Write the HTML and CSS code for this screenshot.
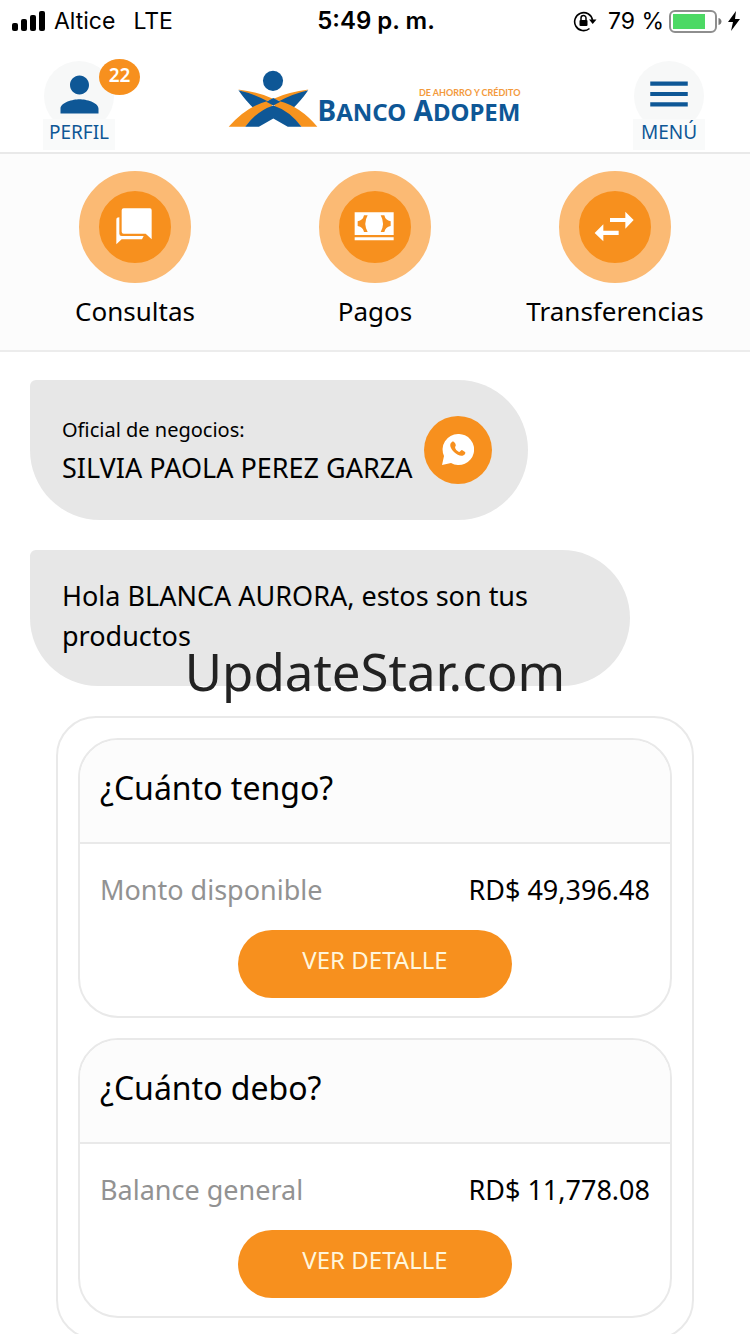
FILE: index.html
```html
<!DOCTYPE html>
<html lang="es">
<head>
<meta charset="utf-8">
<meta name="viewport" content="width=device-width">
<title>Banco Adopem</title>
<link rel="stylesheet" href="styles.css">
</head>
<body>
<div class="status">
  <div class="status-group">
    <svg class="signal" viewBox="0 0 34 20" aria-hidden="true"><rect x="0" y="12" width="6" height="8" rx="2"/><rect x="9" y="8" width="6" height="12" rx="2"/><rect x="18" y="4" width="6" height="16" rx="2"/><rect x="27" y="0" width="6" height="20" rx="2"/></svg>
    <span>Altice</span>
    <span class="network">LTE</span>
  </div>
  <time class="clock">5:49 p. m.</time>
  <div class="status-group status-end">
    <svg class="lock" viewBox="0 0 24 22" aria-hidden="true"><path d="M16.500 18.500A9 9 0 1 1 19.500 10" fill="none" stroke="#000" stroke-width="1.600"/><path d="M16 9.500h7.500l-3.800 4.500z"/><rect x="6.500" y="10" width="8" height="6" rx="1"/><path d="M8 10V8a2.500 2.500 0 0 1 5 0v2" fill="none" stroke="#000" stroke-width="1.500"/></svg>
    <span>79 %</span>
    <svg class="battery" viewBox="0 0 54 23" aria-hidden="true"><rect x="1" y="1" width="46" height="21" rx="5" fill="#fff" stroke="#8e8e8e" stroke-width="2"/><rect x="4" y="4" width="32" height="15" fill="#4cd964"/><path d="M49.500 8v7c4-1 4-6 0-7z" fill="#777"/></svg>
    <svg class="bolt" viewBox="0 0 12 20" aria-hidden="true"><path d="M8 0 0 11h5l-2 9 9-12H7z"/></svg>
  </div>
</div>

<header class="top">
  <button class="nav" type="button">
    <span class="nav-icon"><svg class="person" viewBox="0 0 24 24" aria-hidden="true"><path d="M12 12c2.200 0 4-1.800 4-4s-1.800-4-4-4-4 1.800-4 4 1.800 4 4 4zm0 2c-2.700 0-8 1.300-8 4v2h16v-2c0-2.700-5.300-4-8-4z"/></svg></span>
    <span class="nav-label">PERFIL</span>
    <span class="badge">22</span>
  </button>
  <div class="brand">
    <svg class="mark" viewBox="6 14 268 170" aria-hidden="true">
      <circle cx="140" cy="45" r="30" fill="#0e5796"/>
      <path d="M36 71Q95 78 140 98L116 108 98 103 36 71ZM246 71Q187 78 142 98L166 108 184 103 246 71Z" fill="#f7931e"/>
      <path d="M37 73Q85 84 124 106L108 122 84 128Q60 106 37 73ZM245 73Q197 84 158 106L174 122 198 128Q222 106 245 73Z" fill="#0e5796"/>
      <path d="M8 182Q60 122 122 106L146 118Q92 138 57 182ZM272 182Q222 122 160 106L136 118Q190 138 225 182Z" fill="#f7931e"/>
      <path d="M57 182Q92 134 141 118Q190 134 225 182H184L141 157 98 182Z" fill="#0e5796"/>
      <path d="M141 96 162 107 141 118 120 107Z" fill="#0e5796"/>
    </svg>
    <div class="brand-text">
      <span class="tagline">DE AHORRO Y CRÉDITO</span>
      <span class="brand-name">B<small>ANCO</small> A<small>DOPEM</small></span>
    </div>
  </div>
  <button class="nav" type="button">
    <span class="nav-icon"><svg class="menu" viewBox="0 0 24 24" aria-hidden="true"><path d="M3 6h18v2H3zm0 5h18v2H3zm0 5h18v2H3z"/></svg></span>
    <span class="nav-label">MENÚ</span>
  </button>
</header>

<nav class="actions">
  <button class="action" type="button">
    <span class="disc"><svg viewBox="150 93 216 216" aria-hidden="true"><path d="M224 145H303Q308 145 308 151V238L290 221H224Q218 221 218 215V151Q218 145 224 145ZM202 179Q202 172 211 172V221Q211 228 218 228H284L279 238H218L202 253Z"/></svg></span>
    <span>Consultas</span>
  </button>
  <button class="action" type="button">
    <span class="disc"><svg viewBox="0 0 216 216" aria-hidden="true"><path fill-rule="evenodd" d="M47 64H164V132H47ZM86 73H75Q72 88 56 91V105Q72 108 75 123H86Q72 98 86 73ZM125 73H136Q139 88 155 91V105Q139 108 136 123H125Q139 98 125 73ZM47 139H164V148H47Z"/></svg></span>
    <span>Pagos</span>
  </button>
  <button class="action" type="button">
    <span class="disc"><svg viewBox="237 93 216 216" aria-hidden="true"><path d="M330 174H376V155L401 180 376 206V186H330ZM356 212H310V193L284 219 310 244V225H356Z"/></svg></span>
    <span>Transferencias</span>
  </button>
</nav>

<main>
  <section class="bubble officer">
    <div>
      <p class="role">Oficial de negocios:</p>
      <p>SILVIA PAOLA PEREZ GARZA</p>
    </div>
    <button class="chat" type="button" aria-label="WhatsApp"><svg viewBox="0 0 32 32" aria-hidden="true"><path d="M16 0a15.500 15.500 0 1 1-7 29L0 31l2-9A15.500 15.500 0 0 1 16 0z" fill="#fff"/><path d="M10 8c-3 2-2 6 2 10s9 5 11 2c1-2 0-2-3-4-1 0-2 2-3 2-2-1-4-3-4-5 1-1 1-2 0-4-1-1-2-2-3-1z" fill="#f7901e"/></svg></button>
  </section>

  <section class="bubble greeting">
    <p>Hola BLANCA AURORA, estos son tus productos</p>
  </section>

  <section class="products">
    <article class="card">
      <h2>¿Cuánto tengo?</h2>
      <div class="card-body">
        <div class="row"><span class="muted">Monto disponible</span><span>RD$ 49,396.48</span></div>
        <button class="detail" type="button">VER DETALLE</button>
      </div>
    </article>
    <article class="card">
      <h2>¿Cuánto debo?</h2>
      <div class="card-body">
        <div class="row"><span class="muted">Balance general</span><span>RD$ 11,778.08</span></div>
        <button class="detail" type="button">VER DETALLE</button>
      </div>
    </article>
  </section>
</main>
<div class="watermark">UpdateStar.com</div>
</body>
</html>
```

FILE: styles.css
```css
* {
  box-sizing: border-box;
}

body {
  margin: 0;
  background: #fff;
  color: #000;
  font: 27px/40px "Noto Sans", "Open Sans", sans-serif;
  position: relative;
}

button {
  margin: 0;
  padding: 0;
  border: 0;
  background: none;
  color: inherit;
  font: inherit;
  cursor: pointer;
}

svg {
  display: block;
}

p,
h2 {
  margin: 0;
}

/* Status bar */
.status {
  display: grid;
  grid-template-columns: 1fr auto 1fr;
  align-items: center;
  height: 42px;
  padding: 0 10px 0 12px;
  font: 23px/40px Inter, sans-serif;
}

.status-group {
  display: flex;
  align-items: center;
  gap: 8px;
}

.status-end {
  justify-content: flex-end;
  gap: 5px;
}

.signal {
  width: 34px;
  height: 20px;
}

.network {
  margin-left: 10px;
}

.clock {
  font-size: 24px;
  font-weight: 600;
}

.lock {
  width: 24px;
  height: 22px;
  margin-right: 6px;
}

.battery {
  width: 54px;
  height: 23px;
}

.bolt {
  width: 12px;
  height: 20px;
}

/* Header */
.top {
  display: flex;
  justify-content: space-between;
  align-items: flex-end;
  height: 112px;
  padding: 0 45px 2px 43px;
  border-bottom: 2px solid #e9e9e9;
}

.nav {
  position: relative;
  display: flex;
  flex-direction: column;
  align-items: center;
  width: 72px;
  color: #0e5796;
}

.nav-icon {
  display: grid;
  place-items: center;
  width: 70px;
  height: 70px;
  margin-bottom: -12px;
  padding-bottom: 4px;
  border-radius: 50%;
  background: #f7f8f8;
}

.nav-icon svg {
  fill: #0e5796;
}

.person {
  width: 57px;
  height: 57px;
}

.menu {
  width: 50px;
  height: 50px;
}

.nav-label {
  width: 100%;
  padding-bottom: 5px;
  background: #f9fafa;
  font-size: 19px;
  line-height: 26px;
}

.badge {
  position: absolute;
  top: -2px;
  right: -25px;
  width: 41px;
  height: 36px;
  border-radius: 50%;
  background: #f7901e;
  color: #fff;
  font-size: 19px;
  font-weight: 600;
  line-height: 32px;
}

.brand {
  display: flex;
  align-items: flex-end;
  padding-bottom: 22px;
}

.mark {
  width: 90px;
  height: 58px;
}

.brand-text {
  display: flex;
  flex-direction: column;
  padding-bottom: 4px;
  color: #0e5796;
  font-weight: 700;
}

.tagline {
  align-self: flex-end;
  color: #f39a3c;
  font: 700 9px/10px Lato, sans-serif;
}

.brand-name {
  font-size: 28px;
  line-height: 24px;
  white-space: nowrap;
}

.brand-name small {
  font-size: 24px;
}

/* Quick actions */
.actions {
  display: grid;
  grid-template-columns: repeat(3, 1fr);
  padding: 17px 15px 19px;
  border-bottom: 2px solid #ececec;
  background: #fcfcfc;
}

.action {
  display: flex;
  flex-direction: column;
  align-items: center;
  gap: 8px;
  font-size: 26px;
}

.disc {
  width: 112px;
  height: 112px;
  border: 20px solid #fbba74;
  border-radius: 50%;
  background: #f7901e;
}

.disc svg {
  width: 72px;
  height: 72px;
  fill: #fff;
}

/* Conversation */
main {
  display: flex;
  flex-direction: column;
  align-items: flex-start;
  gap: 30px;
  padding: 28px 30px;
}

.bubble {
  border-radius: 6px 70px 70px 70px;
  background: #e7e7e7;
}

.officer {
  display: flex;
  align-items: center;
  gap: 12px;
  min-height: 140px;
  padding: 0 36px 0 32px;
}

.role {
  font-size: 20px;
  line-height: 36px;
}

.chat {
  display: grid;
  place-items: center;
  width: 68px;
  height: 68px;
  border-radius: 50%;
  background: #f7901e;
}

.chat svg {
  width: 32px;
  height: 32px;
}

.greeting {
  max-width: 600px;
  padding: 26px 80px 30px 32px;
}

/* Products */
.products {
  display: flex;
  flex-direction: column;
  align-self: stretch;
  gap: 20px;
  margin: 0 26px;
  padding: 20px;
  border: 2px solid #e9e9e9;
  border-radius: 40px;
}

.card {
  overflow: hidden;
  border: 2px solid #e9e9e9;
  border-radius: 40px;
}

.card h2 {
  padding: 28px 20px 34px;
  border-bottom: 2px solid #e9e9e9;
  background: #fcfcfc;
  font-size: 32px;
  font-weight: 400;
}

.card-body {
  display: flex;
  flex-direction: column;
  align-items: center;
  gap: 20px;
  padding: 26px 20px 18px;
}

.row {
  display: flex;
  justify-content: space-between;
  align-self: stretch;
}

.muted {
  color: #929292;
}

.detail {
  width: 274px;
  height: 68px;
  padding-bottom: 8px;
  border-radius: 34px;
  background: #f7901e;
  color: #fff6dc;
  font-size: 24px;
}

.watermark {
  position: absolute;
  top: 636px;
  left: 0;
  right: 0;
  color: #222;
  font-size: 51px;
  line-height: 70px;
  text-align: center;
  pointer-events: none;
}
```
